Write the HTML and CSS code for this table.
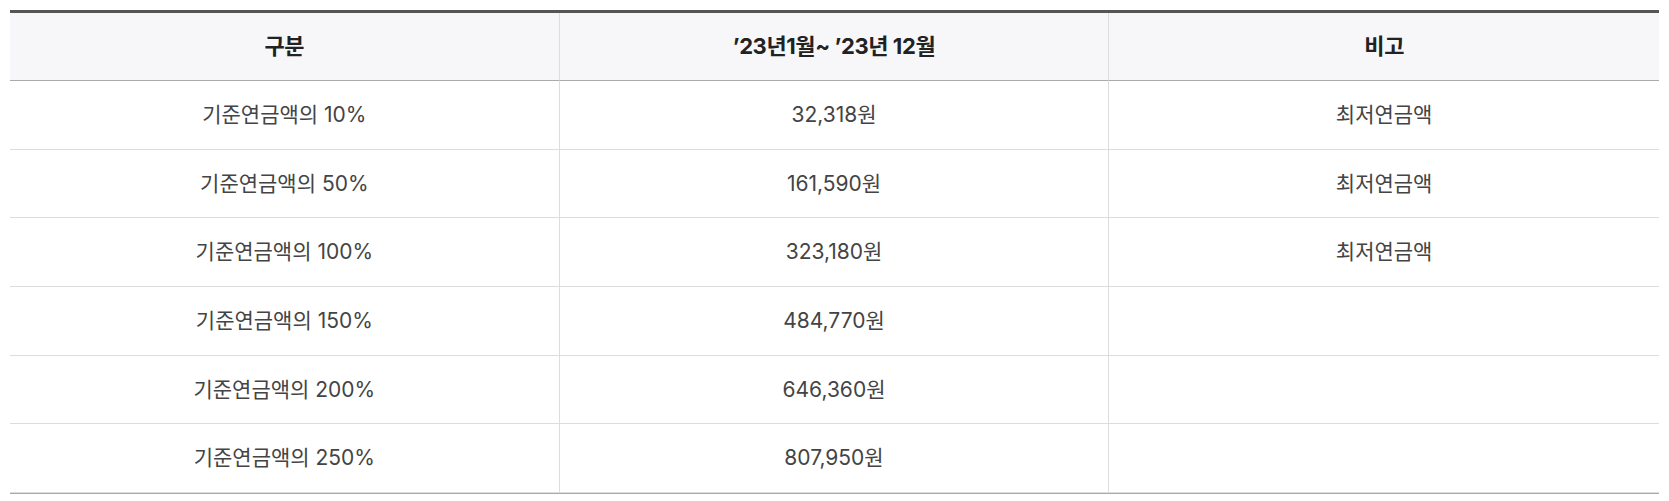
FILE: index.html
```html
<!DOCTYPE html>
<html lang="ko">
<head>
<meta charset="utf-8">
<link rel="stylesheet" href="styles.css">
</head>
<body>
<table class="pension">
  <colgroup><col class="c"><col class="c"><col class="c"></colgroup>
  <thead>
    <tr><th>구분</th><th>’23년1월~ ’23년 12월</th><th>비고</th></tr>
  </thead>
  <tbody>
    <tr><td>기준연금액의 10%</td><td>32,318원</td><td>최저연금액</td></tr>
    <tr><td>기준연금액의 50%</td><td>161,590원</td><td>최저연금액</td></tr>
    <tr><td>기준연금액의 100%</td><td>323,180원</td><td>최저연금액</td></tr>
    <tr><td>기준연금액의 150%</td><td>484,770원</td><td></td></tr>
    <tr><td>기준연금액의 200%</td><td>646,360원</td><td></td></tr>
    <tr><td>기준연금액의 250%</td><td>807,950원</td><td></td></tr>
  </tbody>
</table>
</body>
</html>
```
FILE: styles.css
```css
html, body {
  margin: 0;
  padding: 0;
  background: #fff;
}
body {
  padding: 10px 10px 0 10px;
  font-family: Inter, "Noto Sans CJK KR", sans-serif;
}
.pension {
  width: 100%;
  table-layout: fixed;
  border-collapse: separate;
  border-spacing: 0;
  border-top: 3px solid #555;
  border-bottom: 1px solid #aaa;
}
.pension .c { width: 33.333%; }
.pension th,
.pension td {
  padding: 0;
  text-align: center;
  border-right: 1px solid #ddd;
  white-space: nowrap;
}
.pension th:last-child,
.pension td:last-child {
  border-right: none;
}
.pension th {
  background: #f7f7f9;
  height: 67px;
  line-height: 67px;
  border-bottom: 1px solid #aaa;
  font-size: 22px;
  font-weight: 700;
  color: #222;
  letter-spacing: -0.4px;
}
.pension td {
  height: 67.67px;
  line-height: 67.67px;
  border-bottom: 1px solid #ddd;
  font-size: 21px;
  font-weight: 400;
  color: #444;
  letter-spacing: 0;
}
```
